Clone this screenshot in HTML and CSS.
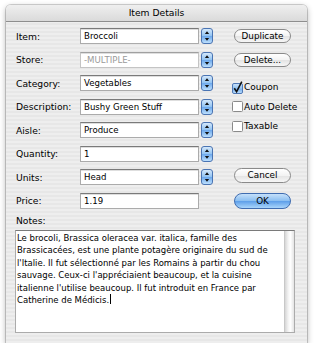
FILE: index.html
```html
<!DOCTYPE html>
<html>
<head>
<meta charset="utf-8">
<link rel="stylesheet" href="styles.css">
</head>
<body>
<div class="window">
  <div class="titlebar">Item Details</div>
  <div class="content">
    <div class="top">
      <div class="form">
        <span class="lbl">Item:</span><div class="field">Broccoli</div><span class="stepper"><svg width="12" height="16" viewBox="0 0 12 16"><path d="M6 3.2 L8.2 6 H3.8 Z" fill="#111"/><path d="M6 12.8 L8.2 10 H3.8 Z" fill="#111"/></svg></span>
        <span class="lbl">Store:</span><div class="field dim">-MULTIPLE-</div><span class="stepper"><svg width="12" height="16" viewBox="0 0 12 16"><path d="M6 3.2 L8.2 6 H3.8 Z" fill="#111"/><path d="M6 12.8 L8.2 10 H3.8 Z" fill="#111"/></svg></span>
        <span class="lbl">Category:</span><div class="field">Vegetables</div><span class="stepper"><svg width="12" height="16" viewBox="0 0 12 16"><path d="M6 3.2 L8.2 6 H3.8 Z" fill="#111"/><path d="M6 12.8 L8.2 10 H3.8 Z" fill="#111"/></svg></span>
        <span class="lbl">Description:</span><div class="field">Bushy Green Stuff</div><span class="stepper"><svg width="12" height="16" viewBox="0 0 12 16"><path d="M6 3.2 L8.2 6 H3.8 Z" fill="#111"/><path d="M6 12.8 L8.2 10 H3.8 Z" fill="#111"/></svg></span>
        <span class="lbl">Aisle:</span><div class="field">Produce</div><span class="stepper"><svg width="12" height="16" viewBox="0 0 12 16"><path d="M6 3.2 L8.2 6 H3.8 Z" fill="#111"/><path d="M6 12.8 L8.2 10 H3.8 Z" fill="#111"/></svg></span>
        <span class="lbl">Quantity:</span><div class="field">1</div><span class="stepper"><svg width="12" height="16" viewBox="0 0 12 16"><path d="M6 3.2 L8.2 6 H3.8 Z" fill="#111"/><path d="M6 12.8 L8.2 10 H3.8 Z" fill="#111"/></svg></span>
        <span class="lbl">Units:</span><div class="field">Head</div><span class="stepper"><svg width="12" height="16" viewBox="0 0 12 16"><path d="M6 3.2 L8.2 6 H3.8 Z" fill="#111"/><path d="M6 12.8 L8.2 10 H3.8 Z" fill="#111"/></svg></span>
        <span class="lbl">Price:</span><div class="field">1.19</div><span></span>
      </div>
      <div class="side">
        <div class="btn">Duplicate</div>
        <div class="btn delete">Delete...</div>
        <div class="checks">
          <div class="check"><svg class="box" width="11" height="13" viewBox="0 0 11 13"><defs><linearGradient id="cb" x1="0" y1="0" x2="0" y2="1"><stop offset="0" stop-color="#cfe5fb"/><stop offset=".5" stop-color="#8fc1f1"/><stop offset=".5" stop-color="#6fa9ea"/><stop offset="1" stop-color="#bfe0fd"/></linearGradient></defs><rect x="0.5" y="2.5" width="10" height="10" rx="1.5" fill="url(#cb)" stroke="#4f78b5"/><path d="M2.3 7.2 L4.6 10.6 L9.8 0.6" fill="none" stroke="#111" stroke-width="1.6"/></svg><span>Coupon</span></div>
          <div class="check"><svg class="box" width="11" height="13" viewBox="0 0 11 13"><rect x="0.5" y="1.5" width="10" height="10" rx="1" fill="#fff" stroke="#8a8a8a"/></svg><span>Auto Delete</span></div>
          <div class="check"><svg class="box" width="11" height="13" viewBox="0 0 11 13"><rect x="0.5" y="1.5" width="10" height="10" rx="1" fill="#fff" stroke="#8a8a8a"/></svg><span>Taxable</span></div>
        </div>
        <div class="btn cancel">Cancel</div>
        <div class="btn ok">OK</div>
      </div>
    </div>
    <div class="notes-label">Notes:</div>
    <div class="notes">
      <div class="notes-text">Le brocoli, Brassica oleracea var. italica, famille des<br>Brassicacées, est une plante potagère originaire du sud de<br>l'Italie. Il fut sélectionné par les Romains à partir du chou<br>sauvage. Ceux-ci l'appréciaient beaucoup, et la cuisine<br>italienne l'utilise beaucoup. Il fut introduit en France par<br>Catherine de Médicis.<span class="caret"></span></div>
      <div class="scroll"></div>
    </div>
  </div>
</div>
</body>
</html>
```
FILE: styles.css
```css
* { box-sizing: border-box; }
html, body { margin: 0; padding: 0; background: #fff; }
body { font-family: "DejaVu Sans", sans-serif; color: #000; }

.window {
  margin: 5px 0 0 6px;
  width: 301px;
  height: 338px;
  border-radius: 5px 5px 0 0;
  background: repeating-linear-gradient(#eeeeee 0 2px, #e7e7e7 2px 4px);
  box-shadow: 0 0 0 1px rgba(0,0,0,.16), 0 2px 6px rgba(0,0,0,.32);
  overflow: hidden;
}
.titlebar {
  height: 17px;
  line-height: 16px;
  text-align: center;
  font-size: 9.2px;
  background: linear-gradient(#efefef, #dadada);
  border-bottom: 1px solid #8e8e8e;
}
.content { padding: 6px 12px 10px 9px; }
.top { display: flex; }
.form {
  flex: none;
  display: grid;
  grid-template-columns: 65px 121px 12px;
  grid-auto-rows: 16px;
  row-gap: 7.57px;
  align-items: center;
}
.lbl { font-size: 9.2px; padding-left: 1px; }
.field {
  width: 119px;
  height: 16px;
  background: #fff;
  border: 1px solid #ababab;
  border-top-color: #7a7a7a;
  box-shadow: inset 0 1px 0 #dedede;
  font-size: 8.6px;
  line-height: 14px;
  padding-left: 3px;
  white-space: nowrap;
  overflow: hidden;
}
.field.dim { color: #9a9a9a; border-color: #c4c4c4; border-top-color: #a0a0a0; }
.stepper {
  width: 12px;
  height: 16px;
  border-radius: 3px;
  border: 1px solid #4a74b3;
  background: linear-gradient(#d4e8fb, #93c4f2 48%, #6ea9ec 52%, #bcdffd);
  display: flex;
  align-items: center;
  justify-content: center;
}
.stepper svg { display: block; flex: none; }

.side {
  flex: none;
  width: 72px;
  margin-left: 19px;
  padding-top: 1px;
  display: flex;
  flex-direction: column;
  align-items: flex-start;
}
.btn {
  margin-left: 2px;
  width: 57px;
  height: 14px;
  border-radius: 8px;
  border: 1px solid #8a8a8a;
  background: linear-gradient(#ffffff, #f3f3f3 50%, #e3e3e3 52%, #f7f7f7);
  font-size: 8.8px;
  line-height: 12px;
  text-align: center;
}
.btn.delete { margin-top: 10px; }
.checks { margin-top: 13.5px; display: flex; flex-direction: column; gap: 6.5px; }
.check { display: flex; align-items: center; height: 13px; gap: 1px; font-size: 9px; white-space: nowrap; }
.box { display: block; flex: none; }
.btn.cancel { margin-top: 35.5px; height: 15px; line-height: 13px; }
.btn.ok {
  margin-top: 10px;
  height: 16px;
  line-height: 14px;
  border-color: #3f6cb0;
  background: linear-gradient(#c5e0fa, #8cbff1 48%, #5e9fe9 52%, #a9d5fb);
}

.notes-label { margin-top: 6px; height: 12px; line-height: 12px; font-size: 9.2px; padding-left: 1px; }
.notes {
  margin-top: 3px;
  height: 103px;
  width: 280px;
  display: flex;
  background: #fff;
  border: 1px solid #ababab;
  border-top-color: #7a7a7a;
}
.notes-text {
  flex: 1;
  font-size: 8.5px;
  line-height: 12.4px;
  padding: 1px 0 0 1px;
  white-space: nowrap;
}
.caret { display: inline-block; width: 1px; height: 10px; background: #000; vertical-align: -1px; margin-left: 1px; }
.scroll {
  width: 10px;
  border-left: 1px solid #c8c8c8;
  background: linear-gradient(to right, #d6d6d6, #f2f2f2 35%, #ffffff 60%, #e4e4e4);
}
```
